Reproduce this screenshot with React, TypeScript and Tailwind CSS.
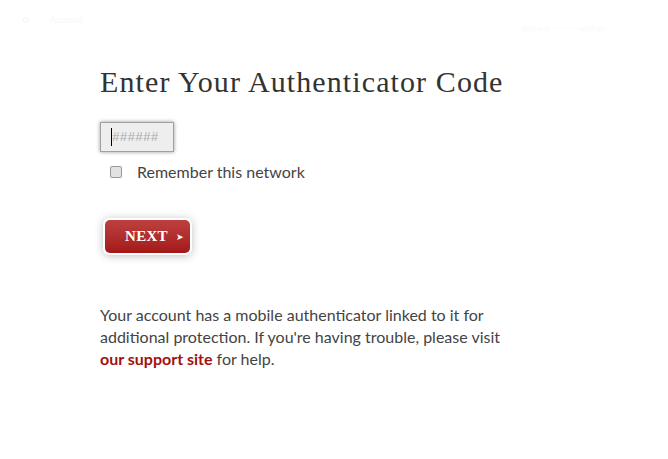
import React from 'react';

export default function App() {
  return (
    <div className="w-[668px] h-[459px] bg-white overflow-hidden font-['Lato',sans-serif]">
      {/* faded header remnants */}
      <div className="flex items-center justify-between h-[40px] px-[22px]">
        <div className="flex items-center gap-[20px] text-[#f8f8f8] text-[9px]">
          <span>✿</span>
          <span>Account</span>
        </div>
        <div className="text-[#f9f9f9] text-[8px] pr-[40px] pt-[16px]">sign out ———— settings</div>
      </div>

      <div className="pl-[100px] pt-[24px]">
        <h1 className="font-['Liberation_Serif',serif] text-[30px] leading-[36px] text-[#333] tracking-[1.1px]">
          Enter Your Authenticator Code
        </h1>

        <div className="mt-[22px] w-[74px] h-[30px] bg-[#eeeeee] border border-[#a0a0a0] shadow-[0_0_4px_rgba(0,0,0,0.4)] flex items-center pl-[10px]">
          <span className="w-px h-[18px] bg-black" />
          <span className="font-['Liberation_Sans',sans-serif] italic text-[13px] text-[#aaa] tracking-[0.5px]">######</span>
        </div>

        <label className="flex items-center mt-[9px] ml-[10px] gap-[15px]">
          <span className="w-[12px] h-[12px] border border-[#999] bg-[#e2e2e2] rounded-[2px]" />
          <span className="text-[16px] text-[#444] leading-[22px]">Remember this network</span>
        </label>

        <div className="mt-[35px] ml-[3px] w-[89px] h-[37px] rounded-[6px] bg-white p-[2px] shadow-[0_1px_8px_rgba(0,0,0,0.25)]">
          <div className="w-full h-full rounded-[5px] bg-gradient-to-b from-[#bd4040] to-[#a31818] flex items-center pl-[20px] gap-[8px]">
            <span className="font-['Liberation_Serif',serif] font-bold text-[15px] text-white tracking-[0.3px]">NEXT</span>
            <span className="text-[9px] text-white">➤</span>
          </div>
        </div>

        <p className="mt-[49px] w-[410px] text-[16px] leading-[22px] text-[#444]">
          Your account has a mobile authenticator linked to it for additional protection. If you're having trouble, please visit{' '}
          <a className="font-bold text-[#a31010]">our support site</a> for help.
        </p>
      </div>
    </div>
  );
}
